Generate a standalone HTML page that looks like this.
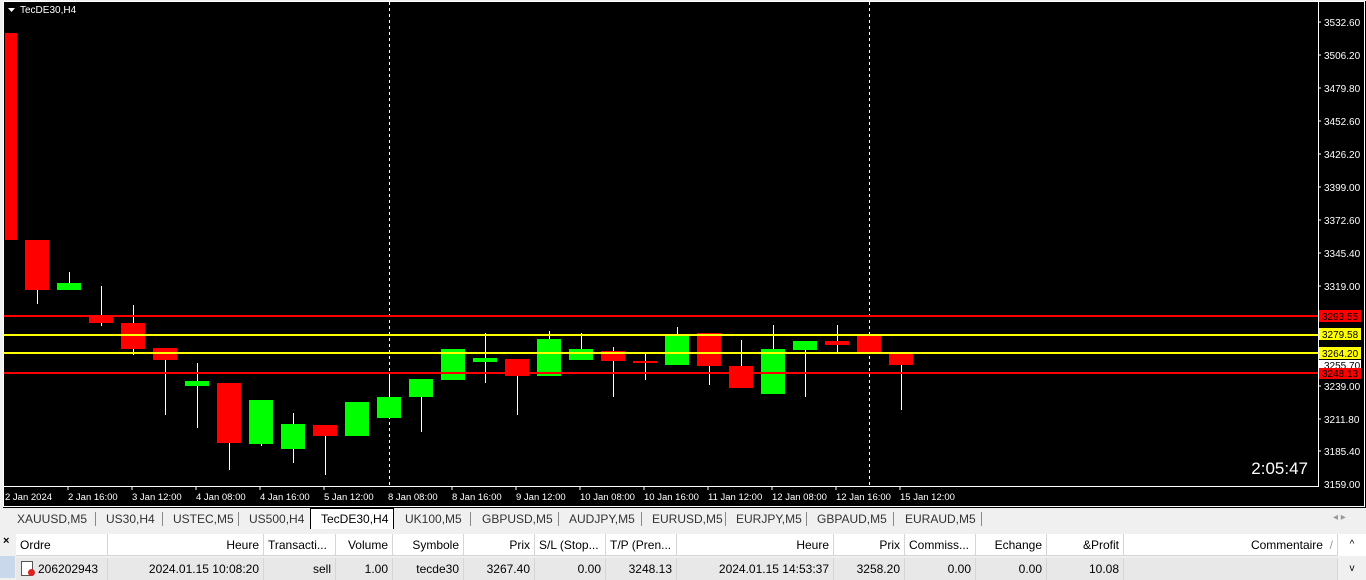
<!DOCTYPE html>
<html><head><meta charset="utf-8"><style>
body{margin:0;width:1366px;height:578px;overflow:hidden;background:#f0f0f0;font-family:"Liberation Sans",sans-serif;}
svg text{font-family:"Liberation Sans",sans-serif;}
.tabs{position:absolute;left:0;top:508px;width:1366px;height:22px;background:#f0f0f0;font-size:12px;color:#333;}
.tab{position:absolute;top:4px;}
.sep{position:absolute;top:4px;width:1px;height:14px;background:#888;}
.tbl{position:absolute;left:0;top:534px;width:1366px;height:44px;font-size:12px;color:#000;}
.c{position:absolute;height:22px;line-height:22px;box-sizing:border-box;border-right:1px solid #d6d6d6;padding:0 4px;white-space:nowrap;overflow:hidden;}
.h{top:0;background:#fff;border-bottom:1px solid #d6d6d6;}
.r{top:24px;background:#e8e8e8;}
</style></head><body>
<svg width="1366" height="508" style="position:absolute;left:0;top:0" xmlns="http://www.w3.org/2000/svg">
<rect x="0" y="0" width="1366" height="508" fill="#000"/>
<rect x="0" y="0" width="3" height="508" fill="#f0f0f0"/>
<rect x="0" y="0" width="1366" height="1" fill="#f0f0f0"/>
<rect x="3.5" y="1.5" width="1361" height="505" fill="none" stroke="#fff" stroke-width="1"/>
<line x1="1318.5" y1="2" x2="1318.5" y2="487" stroke="#fff"/>
<line x1="4" y1="486.5" x2="1318" y2="486.5" stroke="#fff"/>
<line x1="389.5" y1="2" x2="389.5" y2="486" stroke="#fff" stroke-dasharray="3,3"/>
<line x1="869.5" y1="2" x2="869.5" y2="486" stroke="#fff" stroke-dasharray="3,3"/>
<polygon points="8,8 15,8 11.5,12" fill="#fff"/>
<text x="20" y="13" fill="#fff" font-size="10">TecDE30,H4</text>
<g stroke="#fff" stroke-width="1">
<line x1="37.5" y1="290" x2="37.5" y2="304"/>
<line x1="69.5" y1="272" x2="69.5" y2="290"/>
<line x1="101.5" y1="286" x2="101.5" y2="326"/>
<line x1="133.5" y1="305" x2="133.5" y2="355"/>
<line x1="165.5" y1="360" x2="165.5" y2="415"/>
<line x1="197.5" y1="363" x2="197.5" y2="428"/>
<line x1="229.5" y1="443" x2="229.5" y2="470"/>
<line x1="261.5" y1="444" x2="261.5" y2="446"/>
<line x1="293.5" y1="413" x2="293.5" y2="463"/>
<line x1="325.5" y1="436" x2="325.5" y2="475"/>
<line x1="389.5" y1="377" x2="389.5" y2="418"/>
<line x1="421.5" y1="397" x2="421.5" y2="432"/>
<line x1="485.5" y1="333" x2="485.5" y2="383"/>
<line x1="517.5" y1="376" x2="517.5" y2="415"/>
<line x1="549.5" y1="331" x2="549.5" y2="376"/>
<line x1="581.5" y1="333" x2="581.5" y2="360"/>
<line x1="613.5" y1="347" x2="613.5" y2="397"/>
<line x1="645.5" y1="352" x2="645.5" y2="380"/>
<line x1="677.5" y1="327" x2="677.5" y2="365"/>
<line x1="709.5" y1="366" x2="709.5" y2="385"/>
<line x1="741.5" y1="340" x2="741.5" y2="388"/>
<line x1="773.5" y1="325" x2="773.5" y2="394"/>
<line x1="805.5" y1="350" x2="805.5" y2="397"/>
<line x1="837.5" y1="325" x2="837.5" y2="352"/>
<line x1="901.5" y1="365" x2="901.5" y2="410"/>
</g>
<g fill="#ff0000">
<rect x="5" y="33" width="12" height="207"/>
<rect x="25" y="240" width="24" height="50"/>
<rect x="89" y="317" width="24" height="6"/>
<rect x="121" y="323" width="24" height="26"/>
<rect x="153" y="348" width="24" height="12"/>
<rect x="217" y="383" width="24" height="60"/>
<rect x="313" y="425" width="24" height="11"/>
<rect x="505" y="359" width="24" height="17"/>
<rect x="601" y="351" width="24" height="10"/>
<rect x="633" y="361" width="24" height="2"/>
<rect x="697" y="333" width="24" height="33"/>
<rect x="729" y="366" width="24" height="22"/>
<rect x="825" y="341" width="24" height="4"/>
<rect x="857" y="335" width="24" height="18"/>
<rect x="889" y="352" width="24" height="13"/>
</g>
<g fill="#00ff00">
<rect x="57" y="283" width="24" height="7"/>
<rect x="185" y="381" width="24" height="5"/>
<rect x="249" y="400" width="24" height="44"/>
<rect x="281" y="424" width="24" height="25"/>
<rect x="345" y="402" width="24" height="34"/>
<rect x="377" y="397" width="24" height="21"/>
<rect x="409" y="379" width="24" height="18"/>
<rect x="441" y="349" width="24" height="31"/>
<rect x="473" y="358" width="24" height="4"/>
<rect x="537" y="339" width="24" height="37"/>
<rect x="569" y="349" width="24" height="11"/>
<rect x="665" y="334" width="24" height="31"/>
<rect x="761" y="349" width="24" height="45"/>
<rect x="793" y="341" width="24" height="9"/>
</g>
<line x1="4" y1="316" x2="1318" y2="316" stroke="#ff0000" stroke-width="2"/>
<line x1="4" y1="335" x2="1318" y2="335" stroke="#ffff00" stroke-width="2"/>
<line x1="4" y1="353" x2="1318" y2="353" stroke="#ffff00" stroke-width="2"/>
<line x1="4" y1="373" x2="1318" y2="373" stroke="#ff0000" stroke-width="2"/>
<g fill="#fff" font-size="10">
<text x="1324" y="26">3532.60</text><text x="1324" y="59">3506.20</text><text x="1324" y="92">3479.80</text>
<text x="1324" y="125">3452.60</text><text x="1324" y="158">3426.20</text><text x="1324" y="191">3399.00</text>
<text x="1324" y="224">3372.60</text><text x="1324" y="257">3345.40</text><text x="1324" y="290">3319.00</text>
<text x="1324" y="390">3239.00</text><text x="1324" y="423">3211.80</text><text x="1324" y="455">3185.40</text>
<text x="1324" y="488">3159.00</text>
</g>
<g stroke="#fff"><line x1="1318" y1="22" x2="1321" y2="22"/><line x1="1318" y1="55" x2="1321" y2="55"/><line x1="1318" y1="88" x2="1321" y2="88"/><line x1="1318" y1="121" x2="1321" y2="121"/><line x1="1318" y1="154" x2="1321" y2="154"/><line x1="1318" y1="187" x2="1321" y2="187"/><line x1="1318" y1="220" x2="1321" y2="220"/><line x1="1318" y1="253" x2="1321" y2="253"/><line x1="1318" y1="286" x2="1321" y2="286"/><line x1="1318" y1="386" x2="1321" y2="386"/><line x1="1318" y1="419" x2="1321" y2="419"/><line x1="1318" y1="451" x2="1321" y2="451"/></g>
<rect x="1319" y="360" width="42" height="11" fill="#fff"/><text x="1324" y="369" fill="#000" font-size="10">3255.70</text>
<rect x="1319" y="310" width="42" height="12" fill="#ff0000"/><text x="1322" y="320" fill="#000" font-size="10">3293.55</text>
<rect x="1319" y="328" width="42" height="12" fill="#ffff00"/><text x="1322" y="338" fill="#000" font-size="10">3279.58</text>
<rect x="1319" y="347" width="42" height="12" fill="#ffff00"/><text x="1322" y="357" fill="#000" font-size="10">3264.20</text>
<rect x="1319" y="368" width="42" height="11" fill="#ff0000"/><text x="1322" y="377" fill="#000" font-size="10">3248.13</text>
<text x="1308" y="474" fill="#fff" font-size="17" text-anchor="end">2:05:47</text>
<g fill="#fff" font-size="9.5">
<text x="5" y="500">2 Jan 2024</text><text x="68" y="500">2 Jan 16:00</text><text x="132" y="500">3 Jan 12:00</text>
<text x="196" y="500">4 Jan 08:00</text><text x="260" y="500">4 Jan 16:00</text><text x="324" y="500">5 Jan 12:00</text>
<text x="388" y="500">8 Jan 08:00</text><text x="452" y="500">8 Jan 16:00</text><text x="516" y="500">9 Jan 12:00</text>
<text x="580" y="500">10 Jan 08:00</text><text x="644" y="500">10 Jan 16:00</text><text x="708" y="500">11 Jan 12:00</text>
<text x="772" y="500">12 Jan 08:00</text><text x="836" y="500">12 Jan 16:00</text><text x="900" y="500">15 Jan 12:00</text>
</g>
<g stroke="#fff"><line x1="68" y1="487" x2="68" y2="490"/><line x1="132" y1="487" x2="132" y2="490"/><line x1="196" y1="487" x2="196" y2="490"/><line x1="260" y1="487" x2="260" y2="490"/><line x1="324" y1="487" x2="324" y2="490"/><line x1="452" y1="487" x2="452" y2="490"/><line x1="516" y1="487" x2="516" y2="490"/><line x1="580" y1="487" x2="580" y2="490"/><line x1="644" y1="487" x2="644" y2="490"/><line x1="708" y1="487" x2="708" y2="490"/><line x1="772" y1="487" x2="772" y2="490"/><line x1="836" y1="487" x2="836" y2="490"/><line x1="900" y1="487" x2="900" y2="490"/></g>
</svg>
<div class="tabs">
<span class="tab" style="left:17px">XAUUSD,M5</span><span class="sep" style="left:95px"></span>
<span class="tab" style="left:106px">US30,H4</span><span class="sep" style="left:162px"></span>
<span class="tab" style="left:173px">USTEC,M5</span><span class="sep" style="left:238px"></span>
<span class="tab" style="left:249px">US500,H4</span>
<span style="position:absolute;left:310px;top:0;width:82px;height:20px;background:#fff;border:1px solid #000;border-bottom:none;"></span>
<span class="tab" style="left:321px;color:#000">TecDE30,H4</span>
<span class="tab" style="left:405px">UK100,M5</span><span class="sep" style="left:470px"></span>
<span class="tab" style="left:482px">GBPUSD,M5</span><span class="sep" style="left:558px"></span>
<span class="tab" style="left:569px">AUDJPY,M5</span><span class="sep" style="left:641px"></span>
<span class="tab" style="left:652px">EURUSD,M5</span><span class="sep" style="left:725px"></span>
<span class="tab" style="left:736px">EURJPY,M5</span><span class="sep" style="left:806px"></span>
<span class="tab" style="left:817px">GBPAUD,M5</span><span class="sep" style="left:893px"></span>
<span class="tab" style="left:905px">EURAUD,M5</span><span class="sep" style="left:981px"></span>
<span class="tab" style="left:1333px;color:#999;font-size:10px">◂ ▸</span>
</div>
<div style="position:absolute;left:0;top:530px;width:1366px;height:3px;background:#f0f0f0"></div>
<div style="position:absolute;left:0;top:534px;width:15px;height:44px;background:#f0f0f0;font-size:11px;"><div style="position:absolute;left:3px;top:1px;font-weight:bold">×</div><div style="position:absolute;left:0;top:22px;width:15px;height:22px;background:#c9d8ea"></div></div>
<div class="tbl">
<div class="c h" style="left:16px;width:92px">Ordre</div>
<div class="c h" style="left:108px;width:156px;text-align:right">Heure</div>
<div class="c h" style="left:264px;width:72px">Transacti...</div>
<div class="c h" style="left:336px;width:57px;text-align:right">Volume</div>
<div class="c h" style="left:393px;width:71px;text-align:right">Symbole</div>
<div class="c h" style="left:464px;width:71px;text-align:right">Prix</div>
<div class="c h" style="left:535px;width:71px">S/L (Stop...</div>
<div class="c h" style="left:606px;width:71px">T/P (Pren...</div>
<div class="c h" style="left:677px;width:157px;text-align:right">Heure</div>
<div class="c h" style="left:834px;width:71px;text-align:right">Prix</div>
<div class="c h" style="left:905px;width:71px">Commiss...</div>
<div class="c h" style="left:976px;width:71px;text-align:right">Echange</div>
<div class="c h" style="left:1047px;width:77px;text-align:right">&amp;Profit</div>
<div class="c h" style="left:1124px;width:214px;text-align:right">Commentaire &nbsp;<span style="color:#999">/</span></div>
<div class="c h" style="left:1338px;width:28px;border:none;text-align:center;font-size:10px">^</div>
<div class="c r" style="left:16px;width:92px;padding-left:22px;">206202943</div>
<div style="position:absolute;left:21px;top:27px;width:10px;height:13px;border:1px solid #555;background:#fff"></div><div style="position:absolute;left:28px;top:35px;width:7px;height:7px;border-radius:50%;background:#d22"></div>
<div class="c r" style="left:108px;width:156px;text-align:right">2024.01.15 10:08:20</div>
<div class="c r" style="left:264px;width:72px;text-align:right">sell</div>
<div class="c r" style="left:336px;width:57px;text-align:right">1.00</div>
<div class="c r" style="left:393px;width:71px;text-align:right">tecde30</div>
<div class="c r" style="left:464px;width:71px;text-align:right">3267.40</div>
<div class="c r" style="left:535px;width:71px;text-align:right">0.00</div>
<div class="c r" style="left:606px;width:71px;text-align:right">3248.13</div>
<div class="c r" style="left:677px;width:157px;text-align:right">2024.01.15 14:53:37</div>
<div class="c r" style="left:834px;width:71px;text-align:right">3258.20</div>
<div class="c r" style="left:905px;width:71px;text-align:right">0.00</div>
<div class="c r" style="left:976px;width:71px;text-align:right">0.00</div>
<div class="c r" style="left:1047px;width:77px;text-align:right">10.08</div>
<div class="c r" style="left:1124px;width:214px"></div>
<div class="c r" style="left:1338px;width:28px;border:none;background:#f0f0f0;text-align:center;font-size:10px">v</div>
</div>
</body></html>
